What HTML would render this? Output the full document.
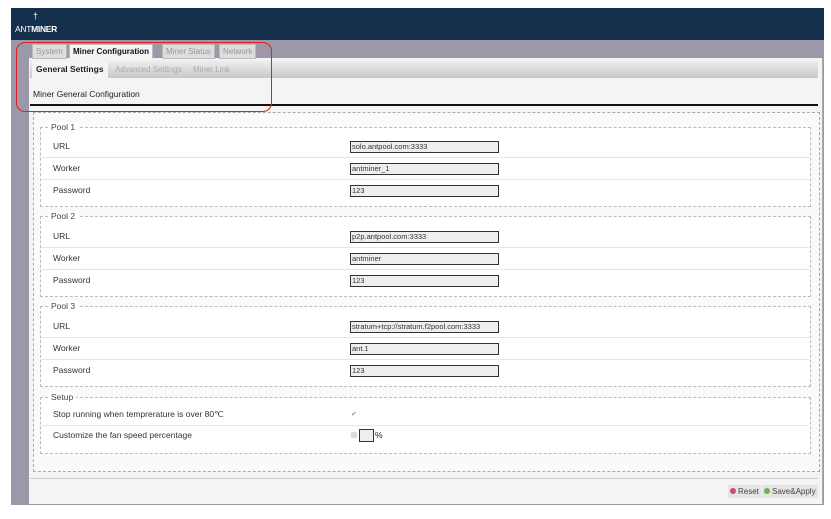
<!DOCTYPE html><html><head><style>
body{margin:0;width:831px;height:519px;background:#fff;position:relative;overflow:hidden;font-family:"Liberation Sans",sans-serif;font-size:8.5px;color:#222}
.a{position:absolute;white-space:nowrap}
.hdr{left:11px;top:8px;width:813px;height:32px;background:#15304d}
.gray{left:11px;top:40px;width:813px;height:465px;background:#9c98aa}
.panel{left:29px;top:58px;width:793px;height:446px;background:#f4f4f4;border-right:1px solid #aaa}
.tab{top:44px;height:13px;line-height:13px;padding:0 3px;background:#ddd;border:1px solid #bbb;color:#999;font-size:8px}
.fs{border:1px dashed #bbb;left:40px;width:769px}
.lg{background:#fff;padding:0 3px;color:#444}
.lbl{left:53px;color:#333}
.inp{left:350px;width:146px;height:10px;border:1px solid #333;background:#eee;font-size:7.5px;line-height:10px;padding-left:1px;color:#333}
.row{left:41px;width:768px;border-top:1px solid #e4e4e4}
</style></head><body>
<div class="a hdr"></div>
<div class="a" style="left:15px;top:24px;color:#fff;font-size:8.5px;letter-spacing:-0.3px">ANT<b>MINER</b></div>
<div class="a" style="left:33px;top:11px;color:#fff;font-size:9px">&#x2020;</div>
<div class="a gray"></div>
<div class="a panel"></div>
<div class="a tab" style="left:32px">System</div>
<div class="a tab" style="left:69px;background:#f4f4f4;color:#111;font-weight:bold;border-bottom-color:#f4f4f4">Miner Configuration</div>
<div class="a tab" style="left:162px">Miner Status</div>
<div class="a tab" style="left:219px">Network</div>
<div class="a" style="left:30px;top:60px;width:788px;height:18px;background:linear-gradient(#f0f0f0,#c8c8c8)"></div>
<div class="a" style="left:32px;top:61px;height:17px;line-height:17px;padding:0 4px;background:#f4f4f4;font-weight:bold">General Settings</div>
<div class="a" style="left:115px;top:65px;color:#aaa;font-size:8px">Advanced Settings</div>
<div class="a" style="left:193px;top:65px;color:#aaa;font-size:8px">Miner Link</div>
<div class="a" style="left:33px;top:89px">Miner General Configuration</div>
<div class="a" style="left:30px;top:104px;width:788px;height:2px;background:#111"></div>
<div class="a" style="left:16px;top:42px;width:254px;height:68px;border:1.5px solid #e02020;border-radius:9px"></div>
<div class="a" style="left:33px;top:112px;width:785px;height:358px;border:1px dashed #aaa;background:#fafafa"></div>

<div class="a fs" style="top:127px;height:78px;background:#fff"></div>
<div class="a lg" style="left:48px;top:122px">Pool 1</div>
<div class="a row" style="top:157px"></div><div class="a row" style="top:179px"></div>
<div class="a lbl" style="top:141px">URL</div><div class="a inp" style="top:141px">solo.antpool.com:3333</div>
<div class="a lbl" style="top:163px">Worker</div><div class="a inp" style="top:163px">antminer_1</div>
<div class="a lbl" style="top:185px">Password</div><div class="a inp" style="top:185px">123</div>

<div class="a fs" style="top:216px;height:79px;background:#fff"></div>
<div class="a lg" style="left:48px;top:211px">Pool 2</div>
<div class="a row" style="top:247px"></div><div class="a row" style="top:269px"></div>
<div class="a lbl" style="top:231px">URL</div><div class="a inp" style="top:231px">p2p.antpool.com:3333</div>
<div class="a lbl" style="top:253px">Worker</div><div class="a inp" style="top:253px">antminer</div>
<div class="a lbl" style="top:275px">Password</div><div class="a inp" style="top:275px">123</div>

<div class="a fs" style="top:306px;height:79px;background:#fff"></div>
<div class="a lg" style="left:48px;top:301px">Pool 3</div>
<div class="a row" style="top:337px"></div><div class="a row" style="top:359px"></div>
<div class="a lbl" style="top:321px">URL</div><div class="a inp" style="top:321px">stratum+tcp://stratum.f2pool.com:3333</div>
<div class="a lbl" style="top:343px">Worker</div><div class="a inp" style="top:343px">ant.1</div>
<div class="a lbl" style="top:365px">Password</div><div class="a inp" style="top:365px">123</div>

<div class="a fs" style="top:397px;height:55px;background:#fff"></div>
<div class="a lg" style="left:48px;top:392px">Setup</div>
<div class="a row" style="top:425px"></div>
<div class="a lbl" style="top:409px">Stop running when temprerature is over 80℃</div>
<div class="a" style="left:351px;top:410px;color:#999;font-size:7px">✔</div>
<div class="a lbl" style="top:430px">Customize the fan speed percentage</div>
<div class="a" style="left:351px;top:432px;width:6px;height:6px;background:#ddd"></div>
<div class="a" style="left:359px;top:429px;width:13px;height:11px;border:1px solid #333;background:#eee"></div>
<div class="a" style="left:375px;top:430px">%</div>

<div class="a" style="left:30px;top:478px;width:788px;height:1px;background:#ccc"></div>
<div class="a" style="left:728px;top:485px;height:13px;line-height:13px;padding:0 2px;background:#e4e4e4;color:#444;font-size:8px"><span style="display:inline-block;width:6px;height:6px;border-radius:3px;background:#c05070;margin-right:2px"></span>Reset</div>
<div class="a" style="left:762px;top:485px;height:13px;line-height:13px;padding:0 2px;background:#e4e4e4;color:#444;font-size:8px"><span style="display:inline-block;width:6px;height:6px;border-radius:3px;background:#70b050;margin-right:2px"></span>Save&amp;Apply</div>
</body></html>
